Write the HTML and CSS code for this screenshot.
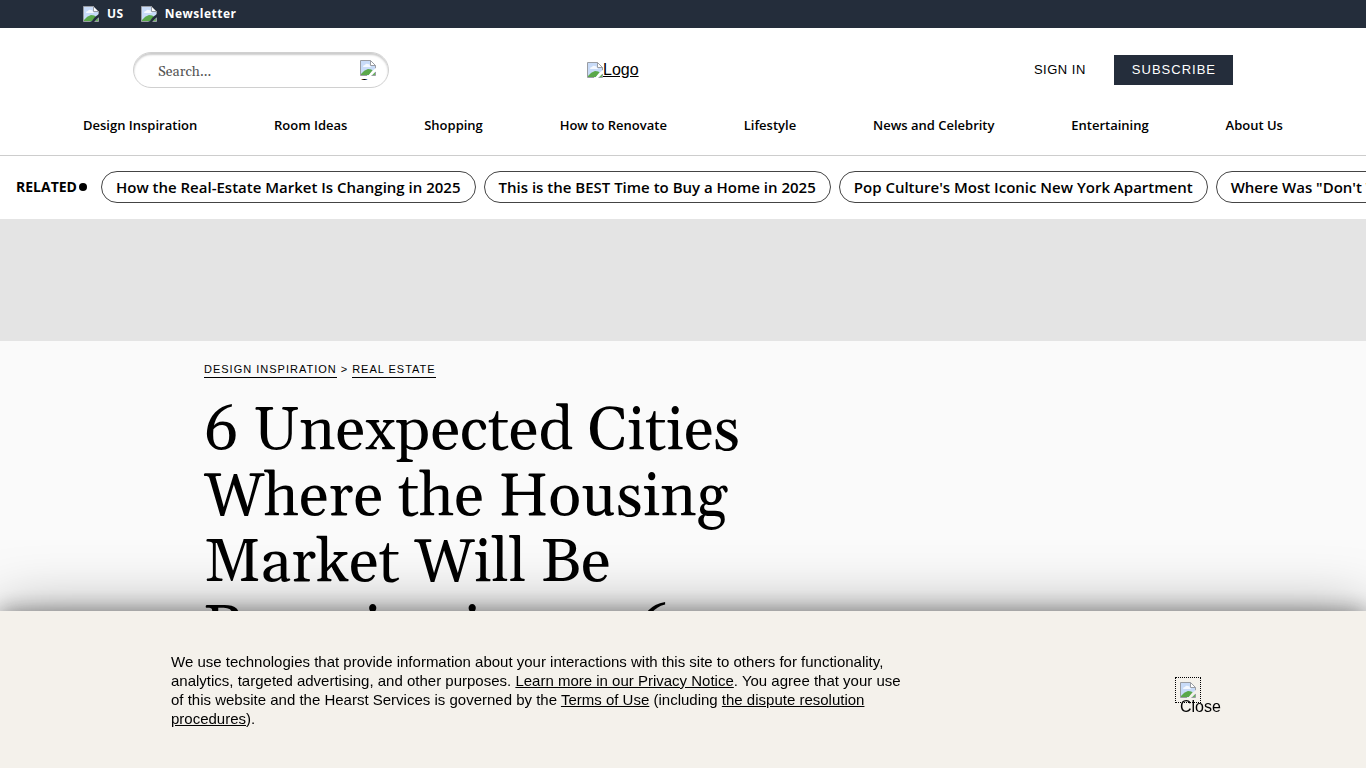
FILE: index.html
```html
<!DOCTYPE html>
<html lang="en">
<head>
<meta charset="utf-8">
<meta name="viewport" content="width=device-width, initial-scale=1">
<title>6 Unexpected Cities Where the Housing Market Will Be Booming in 2026</title>
<link rel="stylesheet" href="styles.css">
</head>
<body>
<svg class="sprite" aria-hidden="true">
  <symbol id="picture" viewBox="0 0 16 16">
    <path d="M.5.5h10l5 5v10H.5z" fill="#c8dbf8"/>
    <path d="M3 7q0-2 2-2 1-2 3-1 2 0 2 2 1 0 1 1z" fill="#f4f8ff"/>
    <path d="M1 15v-1q3-4 7-5 4 0 5 2l-4 4z" fill="#5aa84a"/>
    <path d="M12 15l3-3v3z" fill="#6ab45a"/>
    <path d="M.5 15.5V.5h10l5 5v3M.5 15.500H7M11 15.500h4.500V12" fill="none" stroke="#9a9da3"/>
    <path d="M10.500.5v5h5z" fill="#fff" stroke="#9a9da3"/>
    <path d="M8 16l4-5 4-3v3l-5 5z" class="tear"/>
  </symbol>
</svg>

<div class="topbar">
  <div class="wrap topbar-inner">
    <a href="#"><svg class="icon"><use href="#picture"/></svg>US</a>
    <a href="#"><svg class="icon"><use href="#picture"/></svg>Newsletter</a>
  </div>
</div>

<header class="header">
  <div class="masthead">
    <form class="search">
      <input type="search" aria-label="Search" placeholder="Search...">
      <button type="button" aria-label="Submit search"><svg class="icon"><use href="#picture"/></svg><span>Search</span></button>
    </form>
    <a class="logo" href="#"><svg class="icon"><use href="#picture"/></svg><span>Logo</span></a>
    <div class="account">
      <a href="#">SIGN IN</a>
      <a class="subscribe" href="#">SUBSCRIBE</a>
    </div>
  </div>
  <nav class="wrap nav" aria-label="Main">
    <a href="#">Design Inspiration</a>
    <a href="#">Room Ideas</a>
    <a href="#">Shopping</a>
    <a href="#">How to Renovate</a>
    <a href="#">Lifestyle</a>
    <a href="#">News and Celebrity</a>
    <a href="#">Entertaining</a>
    <a href="#">About Us</a>
  </nav>
</header>

<section class="related" aria-label="Related stories">
  <strong class="related-label">RELATED</strong>
  <a class="pill" href="#">How the Real-Estate Market Is Changing in 2025</a>
  <a class="pill" href="#">This is the BEST Time to Buy a Home in 2025</a>
  <a class="pill" href="#">Pop Culture's Most Iconic New York Apartment</a>
  <a class="pill" href="#">Where Was "Don't Worry Darling" Filmed?</a>
</section>

<div class="ad"></div>

<main class="article">
  <div class="breadcrumb"><a href="#">DESIGN INSPIRATION</a><span>&gt;</span><a href="#">REAL ESTATE</a></div>
  <h1>6 Unexpected Cities Where the Housing Market Will Be Booming in 2026</h1>
</main>

<aside class="consent" aria-label="Privacy notice">
  <p>We use technologies that provide information about your interactions with this site to others for functionality, analytics, targeted advertising, and other purposes. <a href="#">Learn more in our Privacy Notice</a>. You agree that your use of this website and the Hearst Services is governed by the <a href="#">Terms of Use</a> (including <a href="#">the dispute resolution procedures</a>).</p>
  <button class="close" type="button"><svg class="icon"><use href="#picture"/></svg><span>Close</span></button>
</aside>
</body>
</html>
```
FILE: styles.css
```css
* { box-sizing: border-box; }

body {
  margin: 0;
  height: 100vh;
  overflow: hidden;
  background: #fafafa;
  color: #000;
  font-family: "Liberation Sans", Arial, sans-serif;
}

a { color: inherit; }

.sprite { display: none; }
.icon { width: 16px; height: 16px; flex: none; color: #fff; }
.tear { fill: currentColor; }

.wrap {
  width: calc(100% - 166px);
  max-width: 1200px;
  margin: 0 auto;
}

.topbar {
  background: #242d3b;
  color: #fff;
}
.topbar-inner {
  display: flex;
  gap: 17px;
  font: 700 12px/28px "Open Sans", sans-serif;
  letter-spacing: 0.5px;
}
.topbar .icon { color: #242d3b; }
.topbar a { display: flex; align-items: center; gap: 8px; text-decoration: none; }

.header {
  background: #fff;
  border-bottom: 1px solid #cdcdcd;
  padding-top: 24px;
}
.masthead {
  display: grid;
  grid-template-columns: 1fr 192px 1fr;
  align-items: center;
  width: calc(100% - 266px);
  margin: 0 auto;
}
.search {
  display: flex;
  align-items: center;
  width: 256px;
  height: 36px;
  padding: 0 11px 0 24px;
  border: 1px solid #d0d0d0;
  border-radius: 18px;
  box-shadow: inset 0 2px 2px #ccc;
}
.search input {
  flex: 1;
  min-width: 0;
  padding: 3px 0 0;
  border: 0;
  outline: 0;
  background: none;
  font: 14px/20px Georgia, Gelasio, "Liberation Serif", serif;
}
.search input::placeholder { color: #555; opacity: 1; }
.search button {
  width: 17px;
  height: 20px;
  padding: 0;
  overflow: hidden;
  border: 0;
  background: none;
  font: 13px/15px "Liberation Sans", Arial, sans-serif;
  text-align: left;
}
.search .icon, .close .icon { display: block; }
.logo { display: flex; align-items: center; font-size: 16px; line-height: 18px; }
.account {
  display: flex;
  justify-content: flex-end;
  align-items: center;
  gap: 28px;
  font-size: 13px;
  line-height: 30px;
}
.account a {
  letter-spacing: 0.5px;
  text-decoration: none;
}
.account .subscribe {
  padding: 0 17px 0 18px;
  background: #242d3b;
  color: #fff;
  letter-spacing: 1px;
}

.nav {
  display: flex;
  justify-content: space-between;
  padding: 26px 0 19px;
  font: 600 13px/22px "Open Sans", sans-serif;
}
.nav a { text-decoration: none; white-space: nowrap; }

.related {
  display: flex;
  align-items: center;
  gap: 8px;
  padding: 15px 0 16px 16px;
  overflow: hidden;
  background: #fff;
  font: 600 15px/24px "Open Sans", sans-serif;
}
.related-label {
  display: flex;
  align-items: center;
  gap: 2px;
  margin-right: 6px;
  font-size: 14px;
  font-weight: 700;
}
.related-label::after {
  content: "";
  width: 8px;
  height: 8px;
  border-radius: 50%;
  background: #000;
}
.pill {
  flex: none;
  height: 32px;
  padding: 3px 14px;
  border: 1px solid #444;
  border-radius: 16px;
  text-decoration: none;
  white-space: nowrap;
}

.ad { height: 122px; background: #e4e4e4; }

.article {
  width: calc(100% - 408px);
  margin: 0 auto;
  padding-top: 20px;
}
.breadcrumb {
  display: flex;
  gap: 4px;
  font-size: 11px;
  line-height: 16px;
  letter-spacing: 1px;
}
.breadcrumb a { border-bottom: 1px solid #000; text-decoration: none; }
h1 {
  max-width: 620px;
  margin: 20px 0 0;
  font: 400 61px/66px Georgia, Gelasio, "Liberation Serif", serif;
}

.consent {
  position: fixed;
  right: 0;
  bottom: 0;
  left: 0;
  display: flex;
  justify-content: space-between;
  align-items: center;
  padding: 41px 166px 40px 171px;
  background: #f4f1eb;
  box-shadow: 0 0 20px rgba(0, 0, 0, 0.4), 0 0 60px rgba(0, 0, 0, 0.35);
}
.consent p {
  max-width: 740px;
  margin: 0;
  font-size: 15px;
  line-height: 19px;
}
.close {
  display: flex;
  flex-direction: column;
  align-items: flex-start;
  width: 24px;
  height: 24px;
  padding: 4px;
  border: 0;
  outline: 1px dotted #000;
  background: none;
  font: 16px/18px "Liberation Sans", Arial, sans-serif;
}
.close .icon { color: #f4f1eb; }
```
